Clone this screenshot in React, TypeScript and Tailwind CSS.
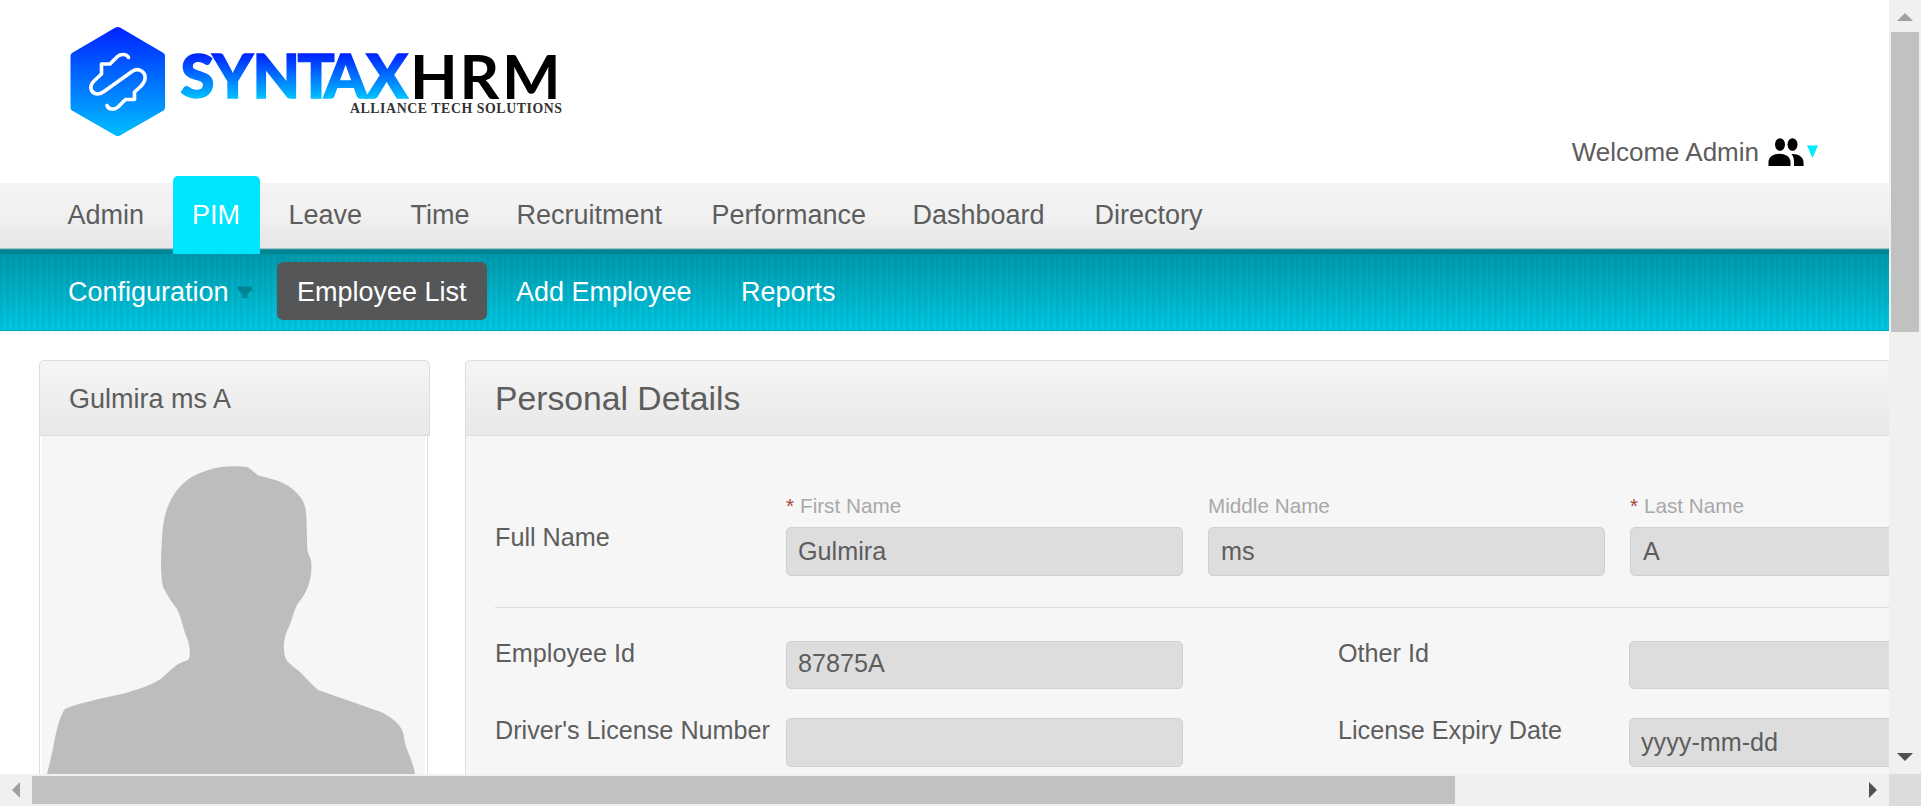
const F = 'font-["Liberation_Sans",Arial,sans-serif]';

const menu = [
  { label: "Admin", w: "w-[125px]" },
  { label: "PIM", w: "w-[96px]", active: true },
  { label: "Leave", w: "w-[122px]" },
  { label: "Time", w: "w-[106px]" },
  { label: "Recruitment", w: "w-[195px]" },
  { label: "Performance", w: "w-[201px]" },
  { label: "Dashboard", w: "w-[182px]" },
  { label: "Directory", w: "w-[140px]" },
];

function Logo() {
  return (
    <svg width="500" height="120" viewBox="66 22 500 120" className="ml-[66px] mt-[22px] block">
      <defs>
        <linearGradient id="hex" x1="0" y1="27" x2="0" y2="136" gradientUnits="userSpaceOnUse">
          <stop offset="0" stopColor="#0022ff" />
          <stop offset="1" stopColor="#00beff" />
        </linearGradient>
        <linearGradient id="word" x1="0" y1="53" x2="0" y2="99" gradientUnits="userSpaceOnUse">
          <stop offset="0" stopColor="#001eff" />
          <stop offset="1" stopColor="#00c3ff" />
        </linearGradient>
      </defs>
      <path d="M115.500 27.500Q117.800 26.300 120 27.500L163.500 53Q165 54 165 56V107.500Q165 109.500 163.500 110.500L120 135.500Q117.800 136.700 115.500 135.500L72 110.500Q70.500 109.500 70.500 107.500V56Q70.500 54 72 53Z" fill="url(#hex)" />
      <path
        d="M128.500 57.500C127 54 121 53.500 117.500 56.500L110 64H101.500V74L94 81C88 87 91.500 94 98 94C100 94 102 93 104 91.500L132 71.500C139 67 146 72 145 79C144.500 83 142 85 140 87L134.500 92V99.500H125.500L118 107C114 110.500 108.500 109.500 107 105.500"
        fill="none" stroke="#fff" strokeWidth="3.600" strokeLinecap="round" strokeLinejoin="round"
      />
      <text x="180.500 212.500 252.500 297.500 324 366" y="98" fontFamily="Lato" fontWeight="900" fontSize="61.500" fill="url(#word)" stroke="url(#word)" strokeWidth="1.500">SYNTAX</text>
      <text x="410 459.500 502" y="99" fontFamily="Lato" fontWeight="700" fontSize="62" fill="#000">HRM</text>
      <text x="350" y="113" textLength="212" lengthAdjust="spacing" fontFamily="Liberation Serif" fontWeight="700" fontSize="13.800" fill="#333">ALLIANCE TECH SOLUTIONS</text>
    </svg>
  );
}

function Field({ value = "", className = "" }: { value?: string; className?: string }) {
  return (
    <div className={`flex w-[397px] shrink-0 items-center rounded-[5px] border border-[#d0d0d0] bg-[#ddd] pl-[11px] text-[25.200px] leading-none text-[#5d5d5d] ${className}`}>
      {value}
    </div>
  );
}

function Hint({ text, required }: { text: string; required?: boolean }) {
  return (
    <div className="flex h-[33px] items-start text-[20.700px] leading-[24px] text-[#a8a8a8]">
      {required && <span className="w-[14px] text-[#aa4935]">*</span>}
      {text}
    </div>
  );
}

export default function App() {
  return (
    <div className={`${F} flex h-[806px] w-[1921px] flex-col overflow-hidden bg-white text-[#5d5d5d]`}>
      <div className="flex h-[774px]">
        <div className="h-[774px] w-[1889px] overflow-hidden">
          <header className="flex h-[183px] justify-between">
            <Logo />
            <div className="mt-[137px] flex h-[30px] items-center pr-[71px]">
              <span className="mr-[9px] text-[26px] leading-[30px]">Welcome Admin</span>
              <svg width="36" height="30" viewBox="0 0 36 30" className="mr-[3px]">
                <ellipse cx="12" cy="7.500" rx="5" ry="6.300" />
                <ellipse cx="24.500" cy="7.500" rx="5" ry="6.300" />
                <path d="M.5 29V25C.5 14 22.500 14 22.500 25V29ZM23.500 17C30 16.500 35.500 20 35.500 25V29H26V25C26 21 25 19 23.500 17Z" />
              </svg>
              <svg width="11" height="14" viewBox="0 0 11 14" className="mb-px"><path d="M0 0.500H11L5.500 13Z" fill="#00eaff" /></svg>
            </div>
          </header>

          <nav className="flex h-[71px] bg-[linear-gradient(#f4f4f4,#f1f1f1_45%,#e6e6e6_65px,#a3c4c8_65px,#a3c4c8_66px,#2b93a0_66px,#2b93a0_67px,#008595_67px)] pl-[67.500px] text-[27px] leading-[31px]">
            {menu.map((m) => (
              <div key={m.label} className={`${m.w} shrink-0`}>
                {m.active ? (
                  <div className="-mt-[7px] -ml-[19.500px] h-[78px] w-[87px] rounded-t-[5px] bg-[#00e5ff] pt-[24px] pl-[19px] text-white">{m.label}</div>
                ) : (
                  <div className="pt-[17px]">{m.label}</div>
                )}
              </div>
            ))}
          </nav>

          <nav className="flex h-[77px] items-start border-b border-[#00a2b8] bg-[repeating-linear-gradient(90deg,rgba(0,60,80,0.07)_0px,rgba(0,60,80,0.07)_3px,transparent_3px,transparent_6px),linear-gradient(#0099ab,#00c8e2)] pt-[8px] pl-[67px] text-[27px] leading-[31px] text-white">
            <div className="flex w-[210px] items-center pt-[15px] pl-px">
              <span className="w-[170px]">Configuration</span>
              <svg width="14" height="13" viewBox="0 0 14 13"><path d="M0 0.500H14V4L9.500 8V12H4.500V8L0 4Z" fill="#008595" /></svg>
            </div>
            <div className="h-[58px] w-[210px] rounded-[6px] bg-[#555658] pt-[15px] pl-[20px]">Employee List</div>
            <div className="w-[224px] pt-[15px] pl-[29px]">Add Employee</div>
            <div className="pt-[15px] pl-[30px]">Reports</div>
          </nav>

          <main className="flex pt-[29px] pl-[39px]">
            <aside className="w-[391px] shrink-0">
              <h2 className="h-[76px] rounded-t-[5px] border border-[#ddd] bg-linear-to-b from-[#f5f5f5] to-[#e8e8e8] pt-[23px] pl-[29px] text-[27px] leading-[31px]">Gulmira ms A</h2>
              <div className="h-[360px] w-[389px] border-x border-[#ddd] bg-white px-[2px]">
                <svg width="383" height="338" viewBox="42 436 383 338" className="block">
                  <path d="M42 436H425V774H42Z" fill="#f6f6f6" />
                  <path d="M47 774C50 762 53 750 55 738C58 724 61 714 65 709C78 703 100 699 122 694C142 688 152 685 162 678C172 669 175 664 188 660C191 657 190 645 187 638C183 629 181 616 177 609C171 602 167 594 163 587C160 574 161 553 162 538C163 509 173 490 190 478C205 469 224 464 247 467C252 469 256 475 260 476C278 480 291 484 301 498C308 508 306 516 307.500 551L311 560C313 576 308 592 299 602C293 610 293 620 287 631C283 640 283 653 286 659C289 665 298 669 302 674C307 679 312 685 318 690L381 712C391 717 402 724 404 736C404 747 412 757 415 774Z" fill="#bdbdbd" />
                </svg>
              </div>
            </aside>

            <section className="ml-[35px] w-[1500px] shrink-0">
              <h1 className="h-[76px] rounded-tl-[5px] border border-[#ddd] bg-linear-to-b from-[#f5f5f5] to-[#e8e8e8] pt-[18px] pl-[29px] text-[33.700px] leading-[39px]">Personal Details</h1>
              <div className="h-[360px] border-l border-[#ddd] bg-[#f6f6f6] pl-[29px] text-[25.200px] leading-[29px]">
                <div className="flex h-[172px] border-b border-[#ddd] pt-[58px]">
                  <div className="w-[291px] shrink-0 pt-[29px]">Full Name</div>
                  <div className="flex gap-[25px]">
                    <div><Hint text="First Name" required /><Field value="Gulmira" className="h-[49px]" /></div>
                    <div><Hint text="Middle Name" /><Field value="ms" className="h-[49px] pl-[12px]" /></div>
                    <div><Hint text="Last Name" required /><Field value="A" className="h-[49px] pl-[12px]" /></div>
                  </div>
                </div>
                <div className="mt-[33px] flex h-[77px]">
                  <div className="-mt-[2px] w-[291px] shrink-0">Employee Id</div>
                  <Field value="87875A" className="h-[48px] pb-[2px]" />
                  <div className="-mt-[2px] ml-[155px] w-[291px] shrink-0">Other Id</div>
                  <Field className="h-[48px]" />
                </div>
                <div className="flex">
                  <div className="-mt-[2px] w-[291px] shrink-0">Driver's License Number</div>
                  <Field className="h-[49px]" />
                  <div className="-mt-[2px] ml-[155px] w-[291px] shrink-0">License Expiry Date</div>
                  <Field value="yyyy-mm-dd" className="h-[49px]" />
                </div>
              </div>
            </section>
          </main>
        </div>

        <div className="flex h-[774px] w-[32px] flex-col items-center bg-[#f0f0f0]">
          <svg width="32" height="32"><path d="M8 21H24L16 13Z" fill="#a0a0a0" /></svg>
          <div className="h-[300px] w-[28px] bg-[#c1c1c1]" />
          <svg width="32" height="32" className="mt-auto"><path d="M8 11H24L16 19Z" fill="#505050" /></svg>
        </div>
      </div>
      <div className="flex h-[32px] items-center bg-[#f0f0f0]">
        <svg width="32" height="32"><path d="M20 8V24L12 16Z" fill="#a0a0a0" /></svg>
        <div className="h-[28px] w-[1423px] bg-[#c1c1c1]" />
        <div className="flex-1" />
        <svg width="32" height="32"><path d="M12 8V24L20 16Z" fill="#505050" /></svg>
        <div className="h-[32px] w-[32px] bg-[#dcdcdc]" />
      </div>
    </div>
  );
}
